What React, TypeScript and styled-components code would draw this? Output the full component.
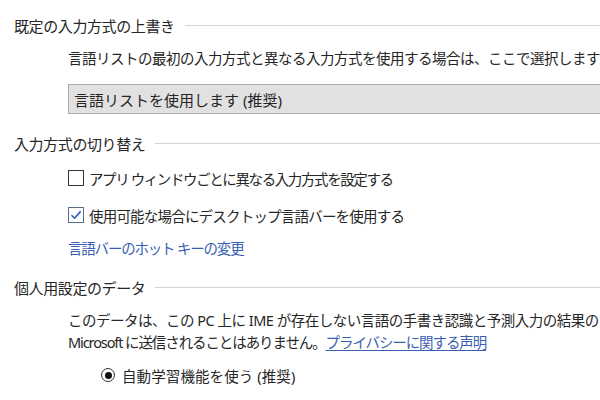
import React from "react";
import styled, { createGlobalStyle } from "styled-components";

const GlobalStyle = createGlobalStyle`
  html, body {
    margin: 0;
    padding: 0;
    background: #ffffff;
  }
  body {
    font-family: "Noto Sans", "Noto Sans CJK JP", sans-serif;
    color: #262626;
  }
`;

const Page = styled.div`
  width: 600px;
  height: 400px;
  overflow: hidden;
  box-sizing: border-box;
  padding: 14px 0 0 14px;
  display: flex;
  flex-direction: column;
`;

const GroupHeader = styled.div<{ $top: number }>`
  display: flex;
  align-items: center;
  gap: 10px;
  height: 22px;
  margin-top: ${(p) => p.$top}px;
  font-size: 15px;
  letter-spacing: -0.4px;
  white-space: nowrap;
`;

const HeaderLine = styled.div`
  flex: 1;
  height: 1px;
  background: #d3d3d3;
`;

const Body = styled.div<{ $top: number }>`
  margin-top: ${(p) => p.$top}px;
  padding-left: 54px;
  display: flex;
  flex-direction: column;
`;

const Text = styled.div<{ $ls?: number }>`
  font-size: 14.5px;
  line-height: 22px;
  letter-spacing: ${(p) => p.$ls ?? -0.5}px;
  white-space: nowrap;
`;

const Narrow = styled.span<{ $ls: number }>`
  letter-spacing: ${(p) => p.$ls}px;
`;

const Dropdown = styled.div`
  margin-top: 15px;
  height: 30px;
  box-sizing: border-box;
  margin-right: -20px;
  background: #e1e1e1;
  border: 1px solid #adadad;
  display: flex;
  align-items: center;
  padding-left: 5px;
  font-size: 15px;
  letter-spacing: 0px;
  white-space: nowrap;
`;

const OptionRow = styled.label<{ $top: number; $ls?: number }>`
  display: flex;
  align-items: center;
  gap: 5px;
  height: 22px;
  margin-top: ${(p) => p.$top}px;
  font-size: 14.5px;
  letter-spacing: ${(p) => p.$ls ?? -0.5}px;
  white-space: nowrap;
`;

const Box = styled.span<{ $checked?: boolean }>`
  width: 16px;
  height: 16px;
  box-sizing: border-box;
  border: 1.5px solid ${(p) => (p.$checked ? "#5b6c93" : "#333333")};
  display: inline-flex;
  align-items: center;
  justify-content: center;
  flex-shrink: 0;
`;

const Radio = styled.span`
  width: 14px;
  height: 14px;
  box-sizing: border-box;
  border-radius: 50%;
  border: 1.5px solid #333333;
  display: inline-flex;
  align-items: center;
  justify-content: center;
  flex-shrink: 0;

  &::after {
    content: "";
    width: 7px;
    height: 7px;
    border-radius: 50%;
    background: #111111;
  }
`;

const Link = styled.a<{ $underline?: boolean }>`
  color: #3a5fb2;
  text-decoration: ${(p) => (p.$underline ? "underline" : "none")};
  text-underline-offset: 2px;
  cursor: pointer;
`;

const LinkLine = styled(Text)`
  margin-top: 11px;
`;

const RadioRow = styled(OptionRow)`
  padding-left: 33px;
  gap: 7px;
`;

function CheckMark() {
  return (
    <svg width="12" height="12" viewBox="0 0 12 12">
      <path d="M1.5 6.2 L4.6 9.2 L10.6 2.4" fill="none" stroke="#2d56b0" strokeWidth="1.6" />
    </svg>
  );
}

export default function App() {
  return (
    <>
      <GlobalStyle />
      <Page>
        <GroupHeader $top={0}>
          既定の入力方式の上書き
          <HeaderLine />
        </GroupHeader>
        <Body $top={11}>
          <Text>言語リストの最初の入力方式と異なる入力方式を使用する場合は、ここで選択します</Text>
          <Dropdown>言語リストを使用します (推奨)</Dropdown>
        </Body>

        <GroupHeader $top={18}>
          入力方式の切り替え
          <HeaderLine />
        </GroupHeader>
        <Body $top={0}>
          <OptionRow $top={13} $ls={-1.4}>
            <Box />
            アプリ ウィンドウごとに異なる入力方式を設定する
          </OptionRow>
          <OptionRow $top={15} $ls={-0.8}>
            <Box $checked>
              <CheckMark />
            </Box>
            使用可能な場合にデスクトップ言語バーを使用する
          </OptionRow>
          <LinkLine $ls={-1.2}>
            <Link>言語バーのホット キーの変更</Link>
          </LinkLine>
        </Body>

        <GroupHeader $top={17}>
          個人用設定のデータ
          <HeaderLine />
        </GroupHeader>
        <Body $top={11}>
          <Text>
            このデータは、この PC 上に IME が存在しない言語の手書き認識と予測入力の結果の
            <br />
            <Narrow $ls={-1.1}>
              Microsoft に送信されることはありません。<Link $underline>プライバシーに関する声明</Link>
            </Narrow>
          </Text>
          <RadioRow $top={11} $ls={0.1}>
            <Radio />
            自動学習機能を使う (推奨)
          </RadioRow>
        </Body>
      </Page>
    </>
  );
}
